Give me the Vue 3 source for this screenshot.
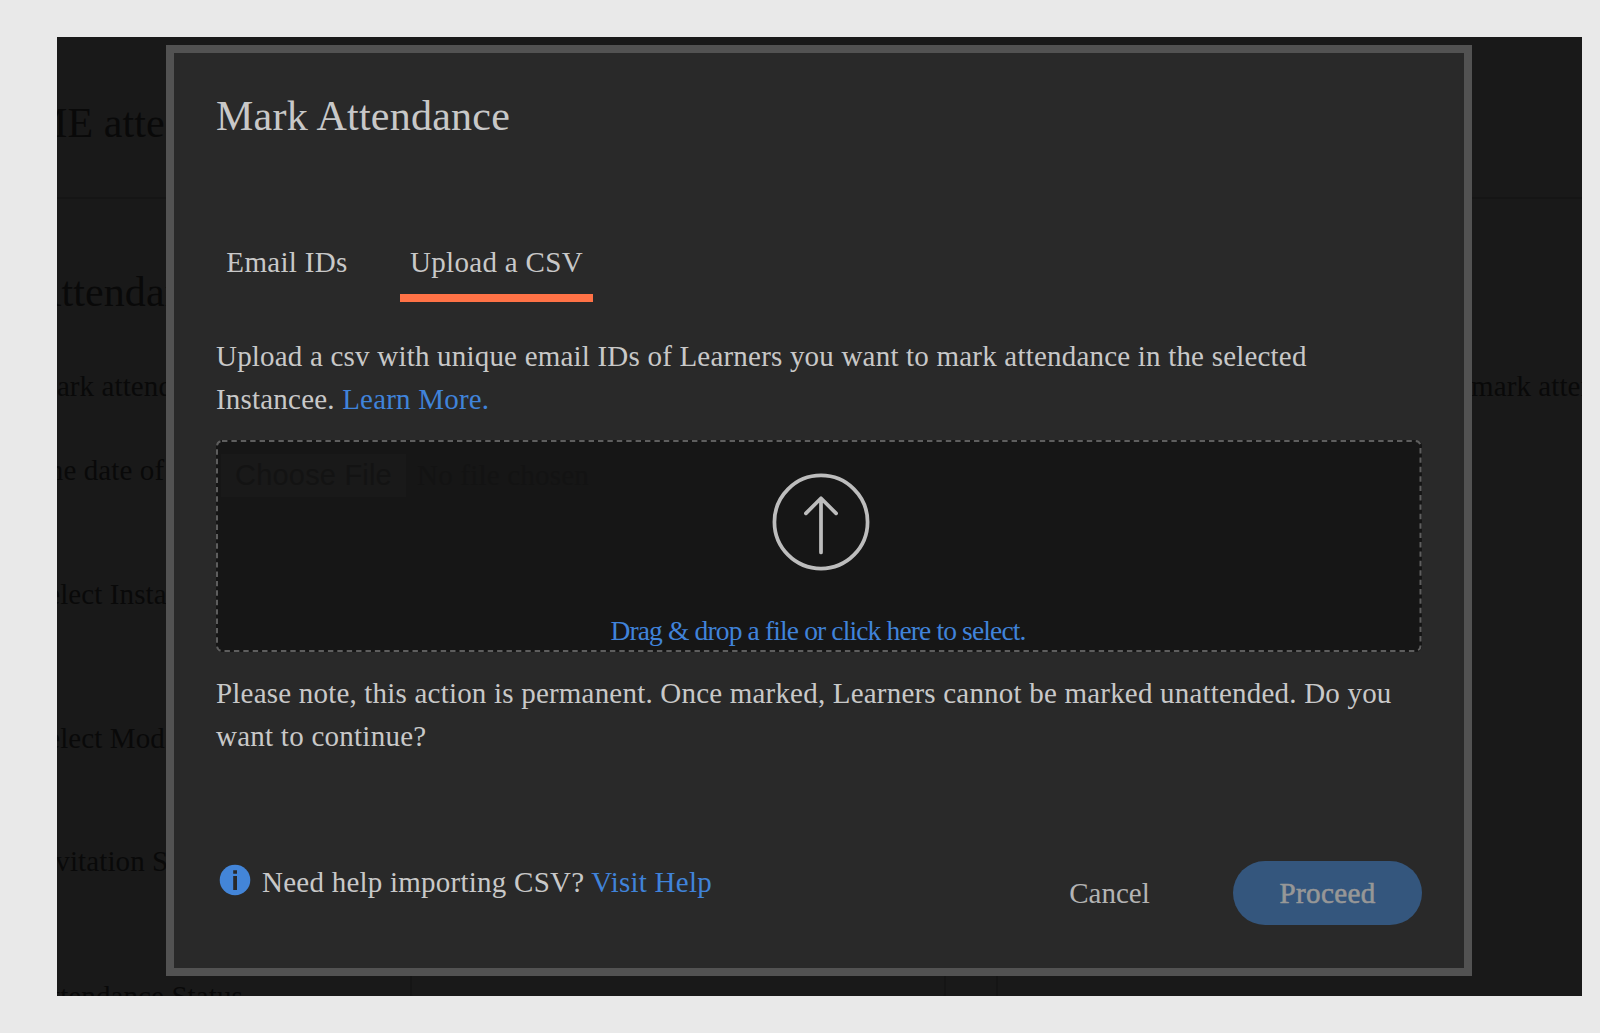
<script setup>
import { ref } from 'vue'

const tabs = [
  { id: 'email', label: 'Email IDs' },
  { id: 'csv', label: 'Upload a CSV' },
]
const active = ref('csv')
</script>

<template>
  <div class="canvas">
    <div class="frame">
      <main class="page">
        <header class="page-head"><h1>ME atte</h1></header>
        <h2>Attendan</h2>
        <div class="intro">
          <span>Mark attend</span>
          <span>mark attendance</span>
        </div>
        <p class="row date">The date of</p>
        <p class="row instance">Select Insta</p>
        <p class="row module">Select Mod</p>
        <p class="row invitation">Invitation S</p>
        <div class="row status">
          <span>Attendance Status</span>
          <i class="field"></i>
          <i class="caret"></i>
        </div>
      </main>

      <section class="modal" role="dialog">
        <h3 class="title">Mark Attendance</h3>
        <nav class="tabs">
          <button
            v-for="t in tabs"
            :key="t.id"
            :class="['tab', t.id, { active: active === t.id }]"
            @click="active = t.id"
          ><span>{{ t.label }}</span></button>
        </nav>
        <div class="copy">
          <p class="line l1">Upload a csv with unique email IDs of Learners you want to mark attendance in the selected</p>
          <p class="line l2">Instancee. <a class="learn">Learn More.</a></p>
        </div>
        <div class="drop">
          <svg class="dash" width="1206" height="212">
            <rect x="1" y="1" width="1203.5" height="210" rx="5" />
          </svg>
          <div class="ghost"><span class="choose">Choose File</span><span class="none">No file chosen</span></div>
          <svg class="up" width="102" height="102" viewBox="0 0 102 102">
            <circle cx="51" cy="51" r="47.5" />
            <path d="M51 82V27M35.6 42.2 51 26.8l15.4 15.4" />
          </svg>
          <a class="select">Drag &amp; drop a file or click here to select.</a>
        </div>
        <div class="note">
          <p class="line n1">Please note, this action is permanent. Once marked, Learners cannot be marked unattended. Do you</p>
          <p class="line n2">want to continue?</p>
        </div>
        <footer class="foot">
          <svg class="info" width="32" height="32" viewBox="0 0 32 32">
            <circle cx="16" cy="16" r="15.3" fill="#4385d8" />
            <path d="M14.2 6.2h3.8v3.6h-3.8zM14.2 12h3.8v14h-3.8z" fill="#292929" />
          </svg>
          <span class="help">Need help importing CSV? <a>Visit Help</a></span>
          <button class="cancel">Cancel</button>
          <button class="proceed">Proceed</button>
        </footer>
      </section>
    </div>
  </div>
</template>

<style>
html,
body {
  margin: 0;
  background: #e9e9e9;
}
</style>

<style scoped>
* {
  box-sizing: border-box;
}
.canvas {
  width: 1600px;
  height: 1033px;
  padding: 37px 18px 0 57px;
  overflow: hidden;
  background: #e9e9e9;
  font-family: "Liberation Serif", "Times New Roman", serif;
}
.frame {
  position: relative;
  width: 1525px;
  height: 959px;
  overflow: hidden;
  background: #191919;
}
h1, h2, h3, p {
  margin: 0;
  font-weight: 400;
}
p, span, a, h1, h2, h3 {
  white-space: nowrap;
}
button {
  padding: 0;
  border: 0;
  background: none;
  font: inherit;
  color: inherit;
}

.page {
  color: #090909;
  font-size: 29px;
  line-height: 42px;
  letter-spacing: 0.1px;
}
.page-head {
  height: 162px;
  padding-top: 65px;
  border-bottom: 2px solid #151515;
}
h1, h2 {
  font-size: 42px;
  line-height: 42px;
}
h1 {
  margin-left: -27px;
}
h2 {
  margin: 72px 0 0 -26px;
}
.intro {
  display: flex;
  margin-top: 52px;
}
.intro span {
  flex: none;
}
.intro span:first-child {
  width: 1440px;
  margin-left: -26px;
}
.row {
  margin-left: -26px;
}
.date { margin-top: 42px; }
.instance { margin-top: 82px; }
.module { margin-top: 102px; }
.invitation { margin-top: 81px; }
.status {
  display: flex;
  margin-top: 93px;
}
.status span {
  width: 379px;
}
.field {
  width: 536px;
  height: 40px;
  margin-top: -15px;
  border: 2px solid #151515;
  border-radius: 6px;
}
.caret {
  width: 52px;
  height: 40px;
  margin-top: -15px;
  border: solid #151515;
  border-width: 2px 2px 2px 0;
}

.modal {
  position: absolute;
  left: 109px;
  top: 8px;
  width: 1306px;
  height: 931px;
  padding: 42px 42px 0 42px;
  border: 8px solid #525252;
  background: #292929;
  color: #c8c8c8;
  font-size: 29px;
  letter-spacing: 0.2px;
}
.title {
  height: 42px;
  font-size: 42px;
  line-height: 42px;
  letter-spacing: 0.25px;
}
.tabs {
  display: flex;
  gap: 42px;
  height: 67px;
  margin-top: 104px;
}
.tab {
  display: flex;
  align-items: flex-start;
  justify-content: center;
  width: 142px;
  height: 61px;
  line-height: 42px;
  letter-spacing: 0.32px;
  border-bottom: 8px solid transparent;
}
.tab.csv {
  width: 193px;
}
.tab.active {
  border-color: #ff7246;
}
.copy {
  margin-top: 27px;
}
.line {
  height: 43px;
  line-height: 43px;
}
.n2 {
  letter-spacing: 0.25px;
}
a {
  color: #4083da;
}
.drop {
  position: relative;
  display: flex;
  flex-direction: column;
  align-items: center;
  width: 1206px;
  height: 212px;
  margin-top: 19px;
  padding-top: 32px;
  border-radius: 6px;
  background: #161616;
}
.dash {
  position: absolute;
  inset: 0;
}
.dash rect {
  fill: none;
  stroke: #5e5e5e;
  stroke-width: 2;
  stroke-dasharray: 5.4 4;
}
.ghost {
  position: absolute;
  left: 5px;
  top: 14px;
  display: flex;
  align-items: center;
  gap: 11px;
  height: 43px;
  color: #131313;
}
.choose {
  width: 185px;
  height: 43px;
  padding-left: 14px;
  line-height: 42px;
  background: #191919;
  font-family: "Liberation Sans", Arial, sans-serif;
}
.none {
  color: #131313;
}
.up {
  margin-left: 4px;
  fill: none;
  stroke: #bdbdbd;
  stroke-width: 3.8;
  stroke-linecap: round;
  stroke-linejoin: round;
}
.select {
  height: 42px;
  margin: 38px 2px 0 0;
  line-height: 42px;
  font-size: 27.5px;
  letter-spacing: -0.86px;
}
.note {
  margin-top: 20px;
}
.foot {
  display: flex;
  align-items: flex-start;
  height: 65px;
  margin-top: 103px;
}
.info {
  margin: 3px 0 0 3px;
}
.help {
  width: 806px;
  margin-left: 11px;
  line-height: 42px;
  letter-spacing: 0.24px;
}
.cancel {
  width: 83px;
  line-height: 65px;
  color: #b4b4b4;
}
.proceed {
  width: 189px;
  height: 64px;
  margin-left: 82px;
  border-radius: 32px;
  background: #34567d;
  color: #979797;
  letter-spacing: 0.4px;
  -webkit-text-stroke: 0.6px #979797;
}
</style>
